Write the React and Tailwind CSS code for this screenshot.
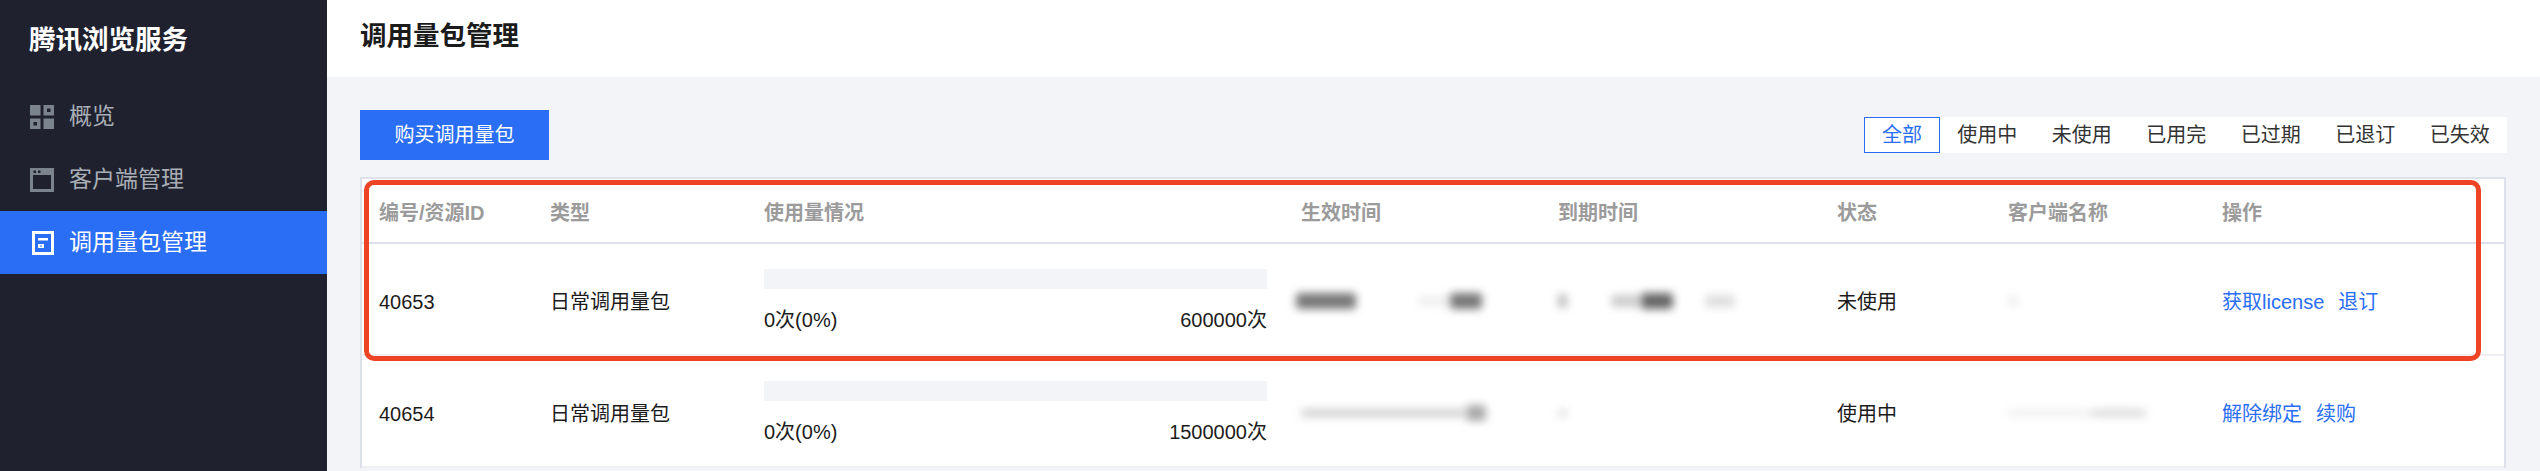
const FONT = "font-['Helvetica_Neue','Liberation_Sans','Noto_Sans_CJK_SC',sans-serif]";

const MENU = [
  { id: 'overview', label: '概览', icon: OverviewIcon },
  { id: 'clients', label: '客户端管理', icon: WindowIcon },
  { id: 'packages', label: '调用量包管理', icon: PackageIcon, active: true },
];

const TABS = ['全部', '使用中', '未使用', '已用完', '已过期', '已退订', '已失效'];
const COLUMNS = ['编号/资源ID', '类型', '使用量情况', '生效时间', '到期时间', '状态', '客户端名称', '操作'];
const GRID = 'grid grid-cols-[171px_214px_537px_257px_279px_171px_214px_1fr] items-center';

function OverviewIcon() {
  return (
    <svg width="24" height="24" viewBox="0 0 24 24" className="text-[#7b838c]">
      <path fill="currentColor" d="M0 0h10.500v10.500H0zM13.500 0H24v10.500H13.500zM0 13.500h10.500V24H0zM13.500 13.500H24V24H13.500z" />
      <path fill="#1f222e" d="M17 3.500h3.500V7H17zM3.500 17H7v3.500H3.500z" />
    </svg>
  );
}

function WindowIcon() {
  return (
    <svg width="24" height="24" viewBox="0 0 24 24" className="text-[#7b838c]">
      <path fill="currentColor" fillRule="evenodd" d="M0 0h24v24H0zM3 7v14h18V7z" />
      <path fill="#1f222e" d="M3.500 2.500h2.500V5H3.500zM8 2.500h2.500V5H8z" />
    </svg>
  );
}

function PackageIcon() {
  return (
    <svg width="24" height="24" viewBox="0 0 24 24" className="text-white">
      <path fill="currentColor" fillRule="evenodd" d="M2 0h22v24H2zM5 3v18h16V3z" />
      <path fill="currentColor" d="M8 7h10v2.500H8zM8 13h6v4H8z" />
      <path fill="#2a6ef5" d="M10 14.500h2v1h-2z" />
    </svg>
  );
}

function Blur({ w, h = 'h-[14px]', tone, ml }) {
  return <div className={`${w} ${h} ${tone} ${ml} rounded-sm blur-[4px]`} />;
}

function Usage({ total }) {
  return (
    <div className="mr-[34px]">
      <div className="h-5 bg-[#f2f4f8]" />
      <div className="flex justify-between mt-[21px] leading-[20px]">
        <span>0次(0%)</span>
        <span>{total}</span>
      </div>
    </div>
  );
}

function Row({ id, total, start, end, status, client, actions }) {
  return (
    <div className={`${GRID} h-[112px] border-b-2 border-[#eef0f5] text-[20px] text-[#1b1b1b] pl-[17px]`}>
      <div className="pt-[5px]">{id}</div>
      <div className="pt-[5px]">日常调用量包</div>
      <Usage total={total} />
      <div className="flex items-center pt-[3px]">{start}</div>
      <div className="flex items-center pt-[3px]">{end}</div>
      <div className="pt-[5px]">{status}</div>
      <div className="flex items-center pt-[3px]">{client}</div>
      <div className="flex gap-[14px] pt-[5px] text-[#2a6ef5]">
        {actions.map(a => <span key={a}>{a}</span>)}
      </div>
    </div>
  );
}

export default function App() {
  return (
    <div className={`${FONT} flex w-[2540px] h-[471px] overflow-hidden bg-[#f2f4f8]`}>
      {/* Sidebar */}
      <aside className="w-[327px] shrink-0 bg-[#1f222e]">
        <div className="h-[79px] pl-[29px] pt-[2px] flex items-center text-[26.500px] font-bold text-white">腾讯浏览服务</div>
        <nav className="pt-[6px]">
          {MENU.map(item => {
            const Icon = item.icon;
            return (
              <div
                key={item.id}
                className={`h-[63px] flex items-center gap-[15px] pl-[30px] text-[23px] ${item.active ? 'bg-[#2a6ef5] text-white' : 'text-[#a9aeb6]'}`}
              >
                <Icon />
                <span>{item.label}</span>
              </div>
            );
          })}
        </nav>
      </aside>

      <main className="flex-1 min-w-0">
        <header className="h-[77px] bg-white pl-[33px] pb-[3px] flex items-center text-[26.500px] font-bold text-[#1b1b1b]">调用量包管理</header>

        <div className="pl-[33px] pr-[34px] pt-[33px]">
          {/* Toolbar */}
          <div className="flex items-start justify-between h-[67px]">
            <button className="w-[189px] h-[50px] bg-[#2a6ef5] text-white text-[20px]">购买调用量包</button>
            <div className="flex mt-[7px] -mr-px bg-white text-[20px] text-[#333]">
              {TABS.map((tab, i) => (
                <div
                  key={tab}
                  className={`h-[36px] flex items-center justify-center ${i === 0 ? 'w-[76px] border border-[#2a6ef5] text-[#2a6ef5]' : 'w-[94.500px]'}`}
                >
                  {tab}
                </div>
              ))}
            </div>
          </div>

          {/* Table */}
          <div className="relative bg-white border-t-2 border-x-2 border-[#dde1ea]">
            <div className={`${GRID} h-[65px] pt-[5px] border-b-2 border-[#dde1ea] text-[20px] font-bold text-[#9b9b9b] pl-[17px]`}>
              {COLUMNS.map(c => <div key={c}>{c}</div>)}
            </div>
            <Row
              id="40653"
              total="600000次"
              status="未使用"
              actions={['获取license', '退订']}
              start={<>
                <Blur w="w-[60px]" h="h-[16px]" tone="bg-[#777] -ml-[5px]" />
                <Blur w="w-[32px]" h="h-[10px]" tone="bg-[#eee]" ml="ml-[62px]" />
                <Blur w="w-[32px]" h="h-[16px]" tone="bg-[#777]" />
              </>}
              end={<>
                <Blur w="w-[9px]" tone="bg-[#bbb]" />
                <Blur w="w-[30px]" h="h-[12px]" tone="bg-[#ccc]" ml="ml-[44px]" />
                <Blur w="w-[32px]" h="h-[16px]" tone="bg-[#666]" />
                <Blur w="w-[30px]" h="h-[12px]" tone="bg-[#ddd]" ml="ml-[32px]" />
              </>}
              client={<Blur w="w-[10px]" h="h-[10px]" tone="bg-[#ececec]" />}
            />
            <Row
              id="40654"
              total="1500000次"
              status="使用中"
              actions={['解除绑定', '续购']}
              start={<>
                <Blur w="w-[165px]" h="h-[8px]" tone="bg-[#d0d0d0]" />
                <Blur w="w-[20px]" h="h-[16px]" tone="bg-[#aaa]" />
              </>}
              end={<Blur w="w-[9px]" h="h-[8px]" tone="bg-[#ddd]" />}
              client={<>
                <Blur w="w-[82px]" h="h-[6px]" tone="bg-[#eee]" />
                <Blur w="w-[56px]" h="h-[8px]" tone="bg-[#ddd]" />
              </>}
            />
            {/* Annotation box drawn over the first two table rows */}
            <div className="absolute left-[2px] top-[1px] w-[2117px] h-[181px] border-[5px] border-[#ee4426] rounded-[10px] pointer-events-none" />
          </div>
        </div>
      </main>
    </div>
  );
}
